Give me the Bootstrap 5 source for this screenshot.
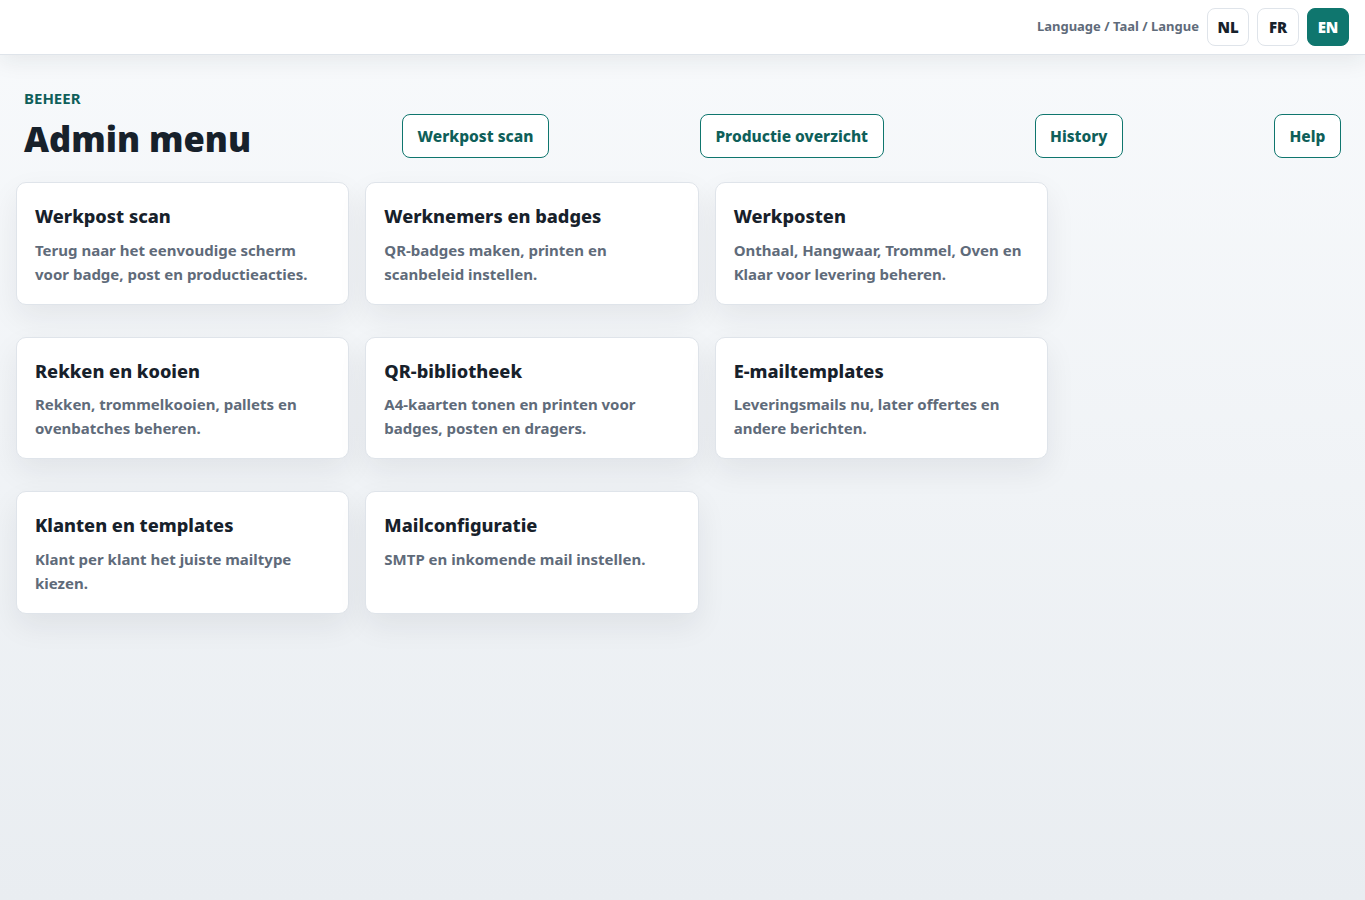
<!DOCTYPE html>
<html lang="nl">
<head>
    <title>Admin menu</title>
    <link href="https://cdn.jsdelivr.net/npm/bootstrap@5.3.0/dist/css/bootstrap.min.css" rel="stylesheet">
    <style>
        body {
            font-family: "Noto Sans", sans-serif;
            min-height: 100vh;
            background: linear-gradient(180deg, #f8fafc 0%, #e9edf1 100%);
            color: #17212b;
        }
        .top-strip {
            height: 55px;
            background: #fff;
            border-bottom: 1px solid #dfe4ea;
            box-shadow: 0 6px 22px rgba(23, 33, 43, .08);
            padding: 0 16px;
            gap: 8px;
        }
        .lang-label { font-size: 13px; font-weight: 700; color: #5f6b7a; }
        .lang-btn {
            width: 42px;
            height: 38px;
            display: flex;
            align-items: center;
            justify-content: center;
            border: 1px solid #dfe4ea;
            border-radius: 8px;
            background: #fff;
            color: #17212b;
            font-size: 15px;
            font-weight: 900;
            padding: 0;
        }
        .lang-btn.is-active { background: #0f766e; border-color: #0f766e; color: #fff; }
        .page-wrap { padding: 33px 16px 16px; }
        .page-head { padding: 0 8px; margin-bottom: 24px; height: 70px; }
        .eyebrow { font-size: 15px; font-weight: 700; color: #0f5f5a; line-height: 20px; }
        .page-title { font-size: 34.5px; font-weight: 900; line-height: 47px; margin: 7px 0 0; color: #17212b; }
        .head-btn {
            height: 44px;
            display: flex;
            align-items: center;
            padding: 1px 14.5px 0;
            border: 1px solid #0f766e;
            border-radius: 8px;
            background: #fff;
            color: #0f5f5a;
            font-size: 15.5px;
            font-weight: 800;
            text-decoration: none;
            margin-top: 26px;
        }
        .menu-grid {
            display: grid;
            grid-template-columns: repeat(3, 333.33px);
            grid-auto-rows: 122.67px;
            column-gap: 16px;
            row-gap: 32px;
        }
        .menu-card {
            background: #fff;
            border: 1px solid #dfe4ea;
            border-radius: 10px;
            box-shadow: 0 12px 30px rgba(23, 33, 43, .07);
            padding: 18px;
            text-decoration: none;
        }
        .menu-card h2 { font-size: 18.2px; font-weight: 800; line-height: 30px; margin: 0 0 6.7px; color: #17212b; }
        .menu-card p { font-size: 15px; font-weight: 700; line-height: 24px; margin: 0; color: #5f6b7a; }
    </style>
</head>
<body>
    <div class="top-strip d-flex align-items-center justify-content-end">
        <span class="lang-label">Language / Taal / Langue</span>
        <button type="button" class="lang-btn">NL</button>
        <button type="button" class="lang-btn">FR</button>
        <button type="button" class="lang-btn is-active">EN</button>
    </div>

    <main class="page-wrap">
        <div class="page-head d-flex justify-content-between align-items-start">
            <div>
                <div class="eyebrow">BEHEER</div>
                <h1 class="page-title">Admin menu</h1>
            </div>
            <a href="#" class="head-btn">Werkpost scan</a>
            <a href="#" class="head-btn">Productie overzicht</a>
            <a href="#" class="head-btn">History</a>
            <a href="#" class="head-btn">Help</a>
        </div>

        <div class="menu-grid">
            <a href="#" class="menu-card"><h2>Werkpost scan</h2><p>Terug naar het eenvoudige scherm voor badge, post en productieacties.</p></a>
            <a href="#" class="menu-card"><h2>Werknemers en badges</h2><p>QR-badges maken, printen en scanbeleid instellen.</p></a>
            <a href="#" class="menu-card"><h2>Werkposten</h2><p>Onthaal, Hangwaar, Trommel, Oven en Klaar voor levering beheren.</p></a>
            <a href="#" class="menu-card"><h2>Rekken en kooien</h2><p>Rekken, trommelkooien, pallets en ovenbatches beheren.</p></a>
            <a href="#" class="menu-card"><h2>QR-bibliotheek</h2><p>A4-kaarten tonen en printen voor badges, posten en dragers.</p></a>
            <a href="#" class="menu-card"><h2>E-mailtemplates</h2><p>Leveringsmails nu, later offertes en andere berichten.</p></a>
            <a href="#" class="menu-card"><h2>Klanten en templates</h2><p>Klant per klant het juiste mailtype kiezen.</p></a>
            <a href="#" class="menu-card"><h2>Mailconfiguratie</h2><p>SMTP en inkomende mail instellen.</p></a>
        </div>
    </main>

    <script src="https://cdn.jsdelivr.net/npm/bootstrap@5.3.0/dist/js/bootstrap.bundle.min.js"></script>
</body>
</html>
